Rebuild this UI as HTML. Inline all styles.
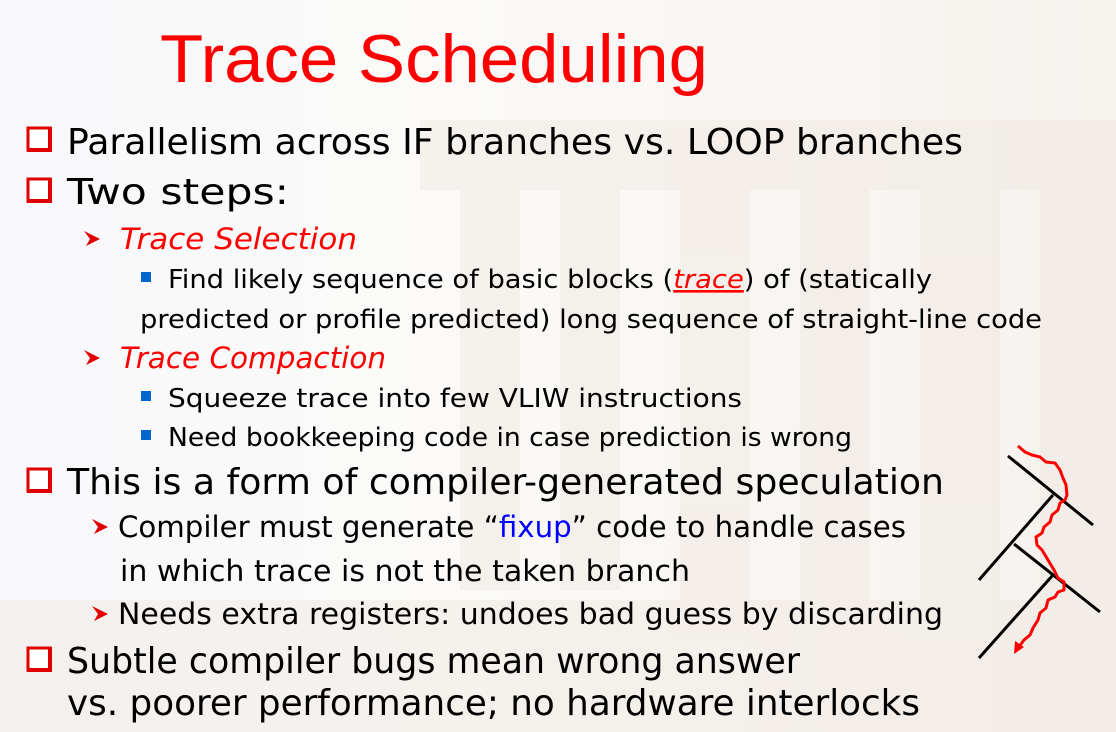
<!DOCTYPE html>
<html><head><meta charset="utf-8"><style>
html,body{margin:0;padding:0;width:1116px;height:732px;overflow:hidden;background:#fbfaf8}
svg{display:block}
text{font-family:"DejaVu Sans","Liberation Sans",sans-serif}
</style></head><body>
<svg width="1116" height="732" viewBox="0 0 1116 732">
<defs>
<linearGradient id="bg" x1="0" y1="0" x2="1" y2="0">
<stop offset="0" stop-color="#f8f8fb"/><stop offset="0.4" stop-color="#fbfaf8"/><stop offset="1" stop-color="#f6f2ee"/>
</linearGradient>
</defs>
<rect width="1116" height="732" fill="url(#bg)"/>
<g fill="#eee7df" opacity="0.45">
<rect x="420" y="120" width="696" height="70"/>
<rect x="460" y="190" width="60" height="400"/>
<rect x="560" y="190" width="60" height="400"/>
<rect x="680" y="190" width="70" height="420"/>
<rect x="800" y="190" width="70" height="420"/>
<rect x="920" y="190" width="80" height="430"/>
<rect x="1040" y="190" width="76" height="430"/>
<rect x="0" y="600" width="1116" height="132"/>
</g>

<text x="160" y="82" font-size="68" fill="#ff0000" textLength="548" lengthAdjust="spacingAndGlyphs" style="font-family:'Liberation Sans',sans-serif">Trace Scheduling</text>

<g fill="#fff" stroke="#e00000" stroke-width="3">
<rect x="28" y="128" width="22" height="22"/><rect x="28" y="179" width="22" height="22"/>
<rect x="28" y="469" width="22" height="22"/><rect x="28" y="648" width="22" height="22"/>
</g>
<g fill="#e00000">
<rect x="27" y="148" width="25" height="4"/><rect x="48" y="127" width="4" height="25"/>
<rect x="27" y="199" width="25" height="4"/><rect x="48" y="178" width="4" height="25"/>
<rect x="27" y="489" width="25" height="4"/><rect x="48" y="468" width="4" height="25"/>
<rect x="27" y="668" width="25" height="4"/><rect x="48" y="647" width="4" height="25"/>
<path d="M84 231 L100 239 L86 246 L90 239Z"/><path d="M84 350 L100 358 L86 365 L90 358Z"/>
<path d="M92 519 L108 527 L94 534 L98 527Z"/><path d="M92 606 L108 614 L94 621 L98 614Z"/>
</g>
<g fill="#0066cc">
<rect x="141" y="272" width="10" height="10"/><rect x="141" y="391" width="10" height="10"/><rect x="141" y="430" width="10" height="10"/>
</g>

<g fill="#000">
<text x="67" y="154" font-size="36" textLength="896" lengthAdjust="spacingAndGlyphs">Parallelism across IF branches vs. LOOP branches</text>
<text x="67" y="204" font-size="36" textLength="222" lengthAdjust="spacingAndGlyphs">Two steps:</text>
<text x="120" y="249" font-size="29" font-style="italic" fill="#ff0000" textLength="237" lengthAdjust="spacingAndGlyphs">Trace Selection</text>
<text x="168" y="288" font-size="26" textLength="764" lengthAdjust="spacingAndGlyphs">Find likely sequence of basic blocks (<tspan fill="#ff0000" font-style="italic" text-decoration="underline">trace</tspan>) of (statically</text>
<text x="140" y="328" font-size="26" textLength="902" lengthAdjust="spacingAndGlyphs">predicted or profile predicted) long sequence of straight-line code</text>
<text x="120" y="368" font-size="29" font-style="italic" fill="#ff0000" textLength="266" lengthAdjust="spacingAndGlyphs">Trace Compaction</text>
<text x="168" y="407" font-size="26" textLength="574" lengthAdjust="spacingAndGlyphs">Squeeze trace into few VLIW instructions</text>
<text x="168" y="446" font-size="26" textLength="684" lengthAdjust="spacingAndGlyphs">Need bookkeeping code in case prediction is wrong</text>
<text x="67" y="494" font-size="36" textLength="877" lengthAdjust="spacingAndGlyphs">This is a form of compiler-generated speculation</text>
<text x="118" y="537" font-size="29" textLength="788" lengthAdjust="spacingAndGlyphs">Compiler must generate “<tspan fill="#0000ff">fixup</tspan>” code to handle cases</text>
<text x="120" y="581" font-size="29" textLength="570" lengthAdjust="spacingAndGlyphs">in which trace is not the taken branch</text>
<text x="118" y="624" font-size="29" textLength="825" lengthAdjust="spacingAndGlyphs">Needs extra registers: undoes bad guess by discarding</text>
<text x="67" y="673" font-size="36" textLength="733" lengthAdjust="spacingAndGlyphs">Subtle compiler bugs mean wrong answer</text>
<text x="67" y="715" font-size="36" textLength="853" lengthAdjust="spacingAndGlyphs">vs. poorer performance; no hardware interlocks</text>
</g>

<g stroke="#000" stroke-width="3" fill="none">
<path d="M1008 456 L1093 525"/><path d="M1053 495 L979 580"/>
<path d="M1014 544 L1100 612"/><path d="M1053 575 L979 658"/>
</g>
<path d="M1018 446 L1025 452 L1032 455 L1040 457 L1046 462 L1055 463 L1060 470 L1063 478 L1066 485 L1067 495 L1065 500 L1060 503 L1058 510 L1052 515 L1050 522 L1044 527 L1042 533 L1036 537 L1037 545 L1042 550 L1048 560 L1054 570 L1058 578 L1064 582 L1064 590 L1058 592 L1055 597 L1048 600 L1046 608 L1040 613 L1038 620 L1033 628 L1030 635 L1024 640 L1018 648" stroke="#ff0000" stroke-width="3" fill="none" stroke-linejoin="round"/>
<path d="M1014 654 L1015 641 L1024 647Z" fill="#ff0000"/>
</svg>
</body></html>
